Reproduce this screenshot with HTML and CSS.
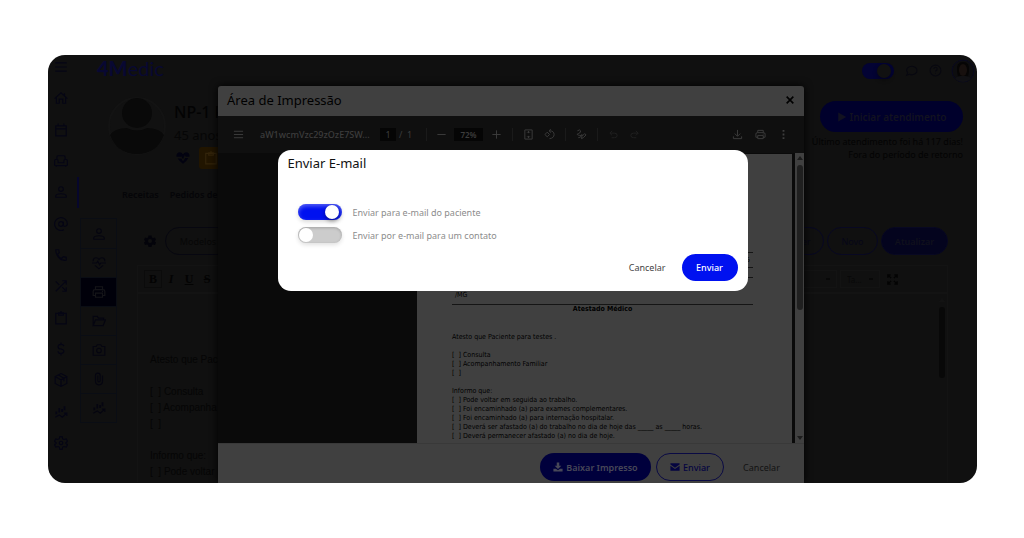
FILE: index.html
```html
<!DOCTYPE html>
<html lang="pt-BR">
<head>
    <meta charset="UTF-8">
    <meta name="viewport" content="width=device-width, initial-scale=1.0">
    <title>4Medic</title>
    <link rel="stylesheet" href="styles.css">
</head>
<body>
    <svg class="defs" aria-hidden="true">
        <symbol id="i-menu" viewBox="0 0 24 24"><path d="M2 5h20M2 12h20M2 19h20"/></symbol>
        <symbol id="i-home" viewBox="0 0 24 24"><path d="M1 13 12 3l11 10M4 11v10h5v-7h6v7h5V11M18 8V4"/></symbol>
        <symbol id="i-cal" viewBox="0 0 24 24"><path d="M3 5h18v17H3zM3 10h18M7 1v4M17 1v4"/></symbol>
        <symbol id="i-sofa" viewBox="0 0 24 24"><path d="M5 10V5q0-2 2-2h10q2 0 2 2v5M7 15v-3q0-3-3-3t-3 3v6q0 2 2 2h18q2 0 2-2v-6q0-3-3-3t-3 3v3zM4 20v2M20 20v2"/></symbol>
        <symbol id="i-user" viewBox="0 0 24 24"><circle cx="12" cy="7" r="4"/><path d="M3 21v-2q0-4 9-4t9 4v2z"/></symbol>
        <symbol id="i-at" viewBox="0 0 24 24"><circle cx="12" cy="12" r="4"/><path d="M16 8v6q0 2 3 2t4-4a11 11 0 1 0-6 10"/></symbol>
        <symbol id="i-phone" viewBox="0 0 24 24"><path d="M3 3h5l1 5-3 3q2 5 7 7l3-3 5 1v5q-8 1-13-5T3 3z"/></symbol>
        <symbol id="i-shuffle" viewBox="0 0 24 24"><path d="m3 4 6 6M3 21 20 4M14 3h7v7M14 14l6 6M21 14v7h-7"/></symbol>
        <symbol id="i-clip" viewBox="0 0 24 24"><path d="M3 4h18v18H3zM8 3h8v4H8zM11 1h2"/></symbol>
        <symbol id="i-money" viewBox="0 0 24 24"><path d="M17 7q-1-3-5-3-5 0-5 4t5 4q5 1 5 4t-5 4q-5 0-5-4M12 1v3M12 20v3"/></symbol>
        <symbol id="i-box" viewBox="0 0 24 24"><path d="m12 1 10 5v12l-10 5-10-5V6zM2 6l10 6 10-6M12 12v11M7 3l10 6v5"/></symbol>
        <symbol id="i-chart" viewBox="0 0 24 24"><path stroke-width="3" d="M4 16v-5M9 13V5M14 12V7M18 9V2"/><path d="M2 21l7-4 5 4 8-7M17 14h5v5"/></symbol>
        <symbol id="i-gear" viewBox="0 0 24 24"><path d="m10 1-1 4-3 1-3-1-2 4 3 3-3 3 2 4 4-1 2 1 1 4h4l1-4 2-1 4 1 2-4-3-3 3-3-2-4-4 1-2-1-1-4z"/><circle cx="12" cy="12" r="3"/></symbol>
        <symbol id="i-gearfill" viewBox="0 0 24 24"><path fill="currentColor" fill-rule="evenodd" stroke="none" d="m9 1-1 4-2 1-4-1-2 5 3 2-3 3 2 5 4-1 2 1 1 4h6l1-4 2-1 4 1 2-5-3-3 3-2-2-5-4 1-2-1-1-4zM12 8a4 4 0 1 1 0 8 4 4 0 0 1 0-8z"/></symbol>
        <symbol id="i-pulse" viewBox="0 0 24 24"><path d="M2 9q0-6 5-6 3 0 5 3 2-3 5-3 5 0 5 6M0 12h8l2-3 3 6 2-3h9M5 16l7 6 7-6"/></symbol>
        <symbol id="i-print" viewBox="0 0 24 24"><path d="M6 8V3h12v5M6 18H2v-7q0-3 3-3h14q3 0 3 3v7h-4M6 14h12v7H6zM17 11h2"/></symbol>
        <symbol id="i-folder" viewBox="0 0 24 24"><path d="M2 20V4h7l2 3h9v3M2 20l4-10h17l-4 10z"/></symbol>
        <symbol id="i-camera" viewBox="0 0 24 24"><path d="M2 6h5l2-3h6l2 3h5v15H2z"/><circle cx="12" cy="13" r="4"/></symbol>
        <symbol id="i-attach" viewBox="0 0 24 24"><path d="M18 6v10a6 6 0 0 1-12 0V6a4 4 0 0 1 8 0v9a2 2 0 0 1-4 0V6"/></symbol>
        <symbol id="i-chat" viewBox="0 0 24 24"><path d="M3 21l2-5Q1 11 5 7q3-3 8-3 9 1 9 8t-9 8q-3 0-5-1z"/></symbol>
        <symbol id="i-help" viewBox="0 0 24 24"><circle cx="12" cy="12" r="10"/><path d="M9 9q0-3 3-3t3 3-3 4v1M12 16v2"/></symbol>
        <symbol id="i-heart" viewBox="0 0 24 24"><path fill="currentColor" stroke="none" d="M1 10Q0 3 6 2q4 0 6 4 2-4 6-4 6 1 5 8h-6l-2-3-3 7-3-5-1 1zM3 13h6l3 5 4-6h5q-2 5-9 10-7-5-9-9z"/></symbol>
        <symbol id="i-full" viewBox="0 0 24 24"><path stroke-width="3" d="m2 2 7 7M22 2l-7 7M2 22l7-7M22 22l-7-7M2 8V2h6M16 2h6v6M2 16v6h6M16 22h6v-6"/></symbol>
        <symbol id="i-fit" viewBox="0 0 24 24"><path d="M4 2h16v20H4zM12 5v4M12 19v-4M9 8l3-3 3 3M9 16l3 3 3-3"/></symbol>
        <symbol id="i-rotate" viewBox="0 0 24 24"><path d="m7 7 5 5-5 5-5-5zM12 4q10 0 10 8t-10 9M15 0l-4 4 4 4"/></symbol>
        <symbol id="i-draw" viewBox="0 0 24 24"><path d="M3 4q6-4 7 0T5 10t3 4 4-3M12 21l1-5 6-6 3 3-6 6zM5 19q6 0 7-5"/></symbol>
        <symbol id="i-undo" viewBox="0 0 24 24"><path d="M9 4 4 9l5 5M4 9h10q6 0 6 5t-6 5H8"/></symbol>
        <symbol id="i-redo" viewBox="0 0 24 24"><path d="m15 4 5 5-5 5M20 9H10q-6 0-6 5t6 5h6"/></symbol>
        <symbol id="i-down" viewBox="0 0 24 24"><path d="M12 2v13M6 10l6 6 6-6M3 16v5h18v-5"/></symbol>
        <symbol id="i-dots" viewBox="0 0 24 24"><path stroke-width="4" d="M12 2v4M12 10v4M12 18v4"/></symbol>
        <symbol id="i-downfill" viewBox="0 0 24 24"><path fill="currentColor" stroke="none" d="M9 1h6v8h5l-8 8-8-8h5zM1 16h6l5 4 5-4h6v7H1z"/></symbol>
        <symbol id="i-mail" viewBox="0 0 24 24"><path fill="currentColor" stroke="none" d="M1 3h22v3l-11 8L1 6zM1 9l11 8 11-8v12H1z"/></symbol>
        <symbol id="i-play" viewBox="0 0 24 24"><path fill="currentColor" stroke="none" d="M3 1v22l19-11z"/></symbol>
        <symbol id="i-close" viewBox="0 0 24 24"><path stroke-width="4" d="m4 4 16 16M20 4 4 20"/></symbol>
        <symbol id="i-minus" viewBox="0 0 24 24"><path d="M3 12h18"/></symbol>
        <symbol id="i-plus" viewBox="0 0 24 24"><path d="M3 12h18M12 3v18"/></symbol>
    </svg>

    <div class="app">
        <nav class="sidebar">
            <a href="#"><svg><use href="#i-menu"/></svg></a>
            <a href="#"><svg><use href="#i-home"/></svg></a>
            <a href="#"><svg><use href="#i-cal"/></svg></a>
            <a href="#"><svg><use href="#i-sofa"/></svg></a>
            <a href="#" class="active"><svg><use href="#i-user"/></svg></a>
            <a href="#"><svg><use href="#i-at"/></svg></a>
            <a href="#"><svg><use href="#i-phone"/></svg></a>
            <a href="#"><svg><use href="#i-shuffle"/></svg></a>
            <a href="#"><svg><use href="#i-clip"/></svg></a>
            <a href="#"><svg><use href="#i-money"/></svg></a>
            <a href="#"><svg><use href="#i-box"/></svg></a>
            <a href="#"><svg><use href="#i-chart"/></svg></a>
            <a href="#"><svg><use href="#i-gear"/></svg></a>
        </nav>

        <main class="main">
            <header class="header">
                <div class="logo"><b>4M</b>edic</div>
                <input type="checkbox" class="toggle dim" aria-label="Disponível" checked>
                <svg class="head-icon"><use href="#i-chat"/></svg>
                <svg class="head-icon"><use href="#i-help"/></svg>
                <svg class="avatar" viewBox="0 0 24 24"><circle cx="12" cy="12" r="11" fill="#0d0d0f" stroke="#0a0a20" stroke-width="1"/><path d="M6 12Q5 3 12 3t6 9l-1 6H7z" fill="#060505"/><ellipse cx="12" cy="11" rx="4" ry="6" fill="#17100e"/><path d="M4 20q1-3 6-3h4q5 0 6 3-8 6-16 0z" fill="#111114"/></svg>
            </header>

            <section class="patient">
                <svg class="photo" viewBox="0 0 58 58"><circle cx="29" cy="29" r="28" fill="#111" stroke="#131313"/><circle cx="29" cy="16" r="15" fill="#090909"/><path d="M2 38q5-7 17-7 10 5 20 0 12 0 17 7-7 19-27 19T2 38z" fill="#090909"/></svg>
                <div class="patient-info">
                    <h1>NP-1 P</h1>
                    <p>45 anos</p>
                    <div class="tags">
                        <svg><use href="#i-heart"/></svg>
                        <span class="tag"><svg><use href="#i-clip"/></svg></span>
                    </div>
                </div>
                <div class="start">
                    <button><svg><use href="#i-play"/></svg>Iniciar atendimento</button>
                    <p>Último atendimento foi há 117 dias!</p>
                    <p>Fora do período de retorno</p>
                </div>
            </section>

            <nav class="tabs">
                <a href="#">Receitas</a>
                <a href="#">Pedidos de</a>
            </nav>

            <section class="work">
                <nav class="submenu">
                    <a href="#"><svg><use href="#i-user"/></svg></a>
                    <a href="#"><svg><use href="#i-pulse"/></svg></a>
                    <a href="#" class="on"><svg><use href="#i-print"/></svg></a>
                    <a href="#"><svg><use href="#i-folder"/></svg></a>
                    <a href="#"><svg><use href="#i-camera"/></svg></a>
                    <a href="#"><svg><use href="#i-attach"/></svg></a>
                    <a href="#"><svg><use href="#i-chart"/></svg></a>
                </nav>
                <div class="editor">
                    <div class="actions">
                        <svg><use href="#i-gearfill"/></svg>
                        <button class="models">Modelos</button>
                        <span class="space"></span>
                        <button class="view">Ver</button>
                        <button>Novo</button>
                        <button class="fill">Atualizar</button>
                    </div>
                    <div class="format">
                        <button class="on"><b>B</b></button>
                        <button><i>I</i></button>
                        <button><u>U</u></button>
                        <button><s>S</s></button>
                        <span class="space"></span>
                        <select aria-label="Fonte"><option></option></select>
                        <select aria-label="Tamanho"><option>Ta...</option></select>
                        <button class="full" aria-label="Tela cheia"><svg><use href="#i-full"/></svg></button>
                    </div>
                    <div class="text">
                        <p>Atesto que Pac</p>
                        <br>
                        <p>[ &nbsp;] Consulta</p>
                        <p>[ &nbsp;] Acompanha</p>
                        <p>[ &nbsp;]</p>
                        <br>
                        <p>Informo que:</p>
                        <p>[ &nbsp;] Pode voltar</p>
                        <div class="bar"><i class="up"></i><span></span></div>
                    </div>
                </div>
            </section>
        </main>

        <section class="print">
            <header class="print-head">
                <h2>Área de Impressão</h2>
                <button aria-label="Fechar"><svg><use href="#i-close"/></svg></button>
            </header>
            <div class="pdf-bar">
                <svg><use href="#i-menu"/></svg>
                <span class="file">aW1wcmVzc29zOzE7SW...</span>
                <input type="text" class="page-no" value="1" aria-label="Página">
                <span class="pages">/ &nbsp;1</span>
                <i class="sep"></i>
                <svg><use href="#i-minus"/></svg>
                <input type="text" class="zoom" value="72%" aria-label="Zoom">
                <svg><use href="#i-plus"/></svg>
                <i class="sep"></i>
                <svg><use href="#i-fit"/></svg>
                <svg class="rot"><use href="#i-rotate"/></svg>
                <i class="sep"></i>
                <svg><use href="#i-draw"/></svg>
                <i class="sep"></i>
                <svg class="off"><use href="#i-undo"/></svg>
                <svg class="off redo"><use href="#i-redo"/></svg>
                <span class="space"></span>
                <svg class="end"><use href="#i-down"/></svg>
                <svg class="end"><use href="#i-print"/></svg>
                <svg class="end"><use href="#i-dots"/></svg>
            </div>
            <div class="viewer">
                <article class="paper">
                    <div class="doctor">5</div>
                    <div class="line"></div>
                    <p class="city">/MG</p>
                    <h3>Atestado Médico</h3>
                    <p>Atesto que Paciente para testes .</p>
                    <br>
                    <p>[ &nbsp;] Consulta</p>
                    <p>[ &nbsp;] Acompanhamento Familiar</p>
                    <p>[ &nbsp;]</p>
                    <br>
                    <p>Informo que:</p>
                    <p>[ &nbsp;] Pode voltar em seguida ao trabalho.</p>
                    <p>[ &nbsp;] Foi encaminhado (a) para exames complementares.</p>
                    <p>[ &nbsp;] Foi encaminhado (a) para internação hospitalar.</p>
                    <p>[ &nbsp;] Deverá ser afastado (a) do trabalho no dia de hoje das _____ as _____ horas.</p>
                    <p>[ &nbsp;] Deverá permanecer afastado (a) no dia de hoje.</p>
                </article>
                <div class="scroll"><i class="up"></i><span></span><i class="down"></i></div>
            </div>
            <footer class="print-foot">
                <button class="fill"><svg><use href="#i-downfill"/></svg>Baixar Impresso</button>
                <button class="outline"><svg><use href="#i-mail"/></svg>Enviar</button>
                <button class="plain">Cancelar</button>
            </footer>
        </section>

        <form class="mail" role="dialog" aria-labelledby="mail-title">
            <h2 id="mail-title">Enviar E-mail</h2>
            <div class="options">
                <label><input type="checkbox" class="toggle" checked>Enviar para e-mail do paciente</label>
                <label><input type="checkbox" class="toggle">Enviar por e-mail para um contato</label>
            </div>
            <div class="mail-foot">
                <button type="button" class="cancel">Cancelar</button>
                <button type="button" class="send">Enviar</button>
            </div>
        </form>
    </div>
</body>
</html>
```
FILE: styles.css
```css
*{
    box-sizing: border-box;
}
body{
    margin:0;
    min-height:100vh;
    padding:55px 47px 55px 48px;
    display: flex;
    background: #fff;
    font-family: "Noto Sans", "Liberation Sans", sans-serif;
    font-size:9px;
    color:#030303;
}
h1,h2,h3,p{
    margin:0;
    font-weight: 400;
}
a{
    color:inherit;
    text-decoration: none;
}
button,input,select{
    font:inherit;
    color:inherit;
    border:0;
    padding:0;
    background: none;
}
button{
    display: flex;
    align-items: center;
    justify-content: center;
    gap:3px;
    white-space: nowrap;
}
svg{
    width:14px;
    height:14px;
    flex:none;
    display: block;
    fill:none;
    stroke:currentColor;
    stroke-width:2;
}
.defs{
    position: absolute;
    width:0;
    height:0;
}
.space{
    flex:1;
}
.app{
    position: relative;
    flex:1;
    min-width:0;
    display: flex;
    overflow: hidden;
    border-radius: 17px;
    background: #101010;
}

/* sidebar */
.sidebar{
    width:31px;
    padding:5px 0 33px 6px;
    display: flex;
    flex-direction: column;
    justify-content: space-between;
    color:#050514;
}
.sidebar a{
    position: relative;
}
.sidebar .active::after{
    content:"";
    position: absolute;
    right:0;
    top:-8px;
    width:2px;
    height:31px;
    background: #06062c;
}
.main{
    flex:1;
    min-width:0;
    height:427px;
    overflow: hidden;
}
.header{
    height:31px;
    padding:0 2px 0 18px;
    display: flex;
    align-items: center;
    color:#080810;
}
.logo{
    flex:1;
    padding-bottom:5px;
    font-family: Lato, sans-serif;
    font-size:20px;
    line-height: 20px;
    color:#080832;
}
.logo b{
    font-weight: 900;
}
.head-icon{
    width:13px;
    height:13px;
    margin-left:11px;
}
.avatar{
    width:24px;
    height:24px;
    margin-left:9px;
    stroke:none;
}

/* toggle */
.toggle{
    appearance: none;
    flex:none;
    width:44px;
    height:16px;
    margin:0;
    padding:1px;
    border-radius: 8px;
    background: #ccc;
    box-shadow: inset 0 1px 3px rgba(0,0,0,.2), 0 2px 4px rgba(0,0,0,.12);
}
.toggle::before{
    content:"";
    display: block;
    width:14px;
    height:14px;
    border-radius: 50%;
    background: #fff;
}
.toggle:checked{
    background: #0011f0;
    box-shadow: inset 0 2px 4px rgba(255,255,255,.35), 0 2px 4px rgba(0,0,0,.15);
}
.toggle:checked::before{
    margin-left:auto;
    margin-right:2px;
    box-shadow: 0 2px 4px rgba(0,0,0,.4);
}
.toggle.dim{
    width:32px;
    background: #030334;
    box-shadow: none;
}
.toggle.dim::before{
    background: #111;
}

/* patient */
.patient{
    margin-top:11px;
    height:74px;
    padding:0 14px 0 29px;
    display: flex;
}
.photo{
    width:58px;
    height:58px;
    stroke:none;
}
.patient-info{
    flex:1;
    padding:4px 0 0 8px;
}
.patient-info h1{
    font-size:16px;
    line-height: 22px;
    font-weight: 500;
}
.patient-info p{
    font-size:13px;
    line-height: 24px;
    color:#060606;
}
.tags{
    display: flex;
    align-items: center;
    gap:9px;
    padding-left:2px;
    color:#020210;
}
.tag{
    padding:4px 5px;
    border-radius: 3px;
    background: #211500;
    color:#33240a;
}
.start{
    padding-top:4px;
    display: flex;
    flex-direction: column;
    align-items: flex-end;
}
.start button{
    width:143px;
    height:31px;
    margin-bottom:3px;
    border-radius: 16px;
    background: #00002c;
    color:#121220;
    font-size:10px;
    font-weight: 600;
}
.start button svg{
    width:10px;
    height:10px;
}
.start p{
    line-height: 13px;
}
.tabs{
    margin-top:14px;
    padding-left:43px;
    display: flex;
    gap:11px;
    line-height: 20px;
    font-weight: 600;
    color:#050508;
}

/* work area */
.work{
    margin-top:13px;
    padding:0 29px 0 1px;
    display: flex;
    align-items: flex-start;
    gap:20px;
}
.submenu{
    width:37px;
    border:1px solid #0a0d14;
    color:#050510;
}
.submenu a{
    height:29px;
    display: flex;
    align-items: center;
    justify-content: center;
}
.submenu a + a{
    border-top:1px solid #0a0d14;
}
.submenu .on{
    background: #00000a;
    color:#141418;
}
.editor{
    flex:1;
    min-width:0;
}
.actions{
    padding:9px 0 10px 7px;
    display: flex;
    align-items: center;
    gap:3px;
    color:#03030a;
}
.actions svg{
    width:12px;
    height:12px;
}
.actions button{
    width:51px;
    height:28px;
    border:1px solid #080822;
    border-radius: 14px;
    color:#060618;
}
.actions .view{
    padding-left:10px;
}
.actions .models{
    width:66px;
    margin-left:6px;
    border-color:#070710;
    color:#070707;
}
.actions .fill{
    width:67px;
    background: #04041e;
    color:#10101c;
    font-weight: 600;
}
.format{
    height:28px;
    padding:0 46px 0 6px;
    border:1px solid #131313;
    display: flex;
    align-items: center;
    font-family: "Liberation Serif", serif;
    font-size:12px;
    font-weight: 700;
}
.format button{
    width:18px;
    height:18px;
}
.format .on{
    border:1px solid #0b0b0b;
}
.format select{
    appearance: none;
    width:40px;
    height:18px;
    margin-right:3px;
    padding:0 6px;
    border:1px solid #131313;
    background: linear-gradient(#080808,#080808) right 6px center / 4px 2px no-repeat;
    color:#080808;
    font-family: "Noto Sans", sans-serif;
    font-size:8px;
    font-weight: 400;
}
.format svg{
    width:11px;
    height:11px;
}
.text{
    position: relative;
    height:200px;
    padding:58px 12px;
    border:1px solid #131313;
    color:#050505;
    font-family: "Liberation Sans", sans-serif;
    font-size:10px;
    line-height: 16px;
}
.bar{
    position: absolute;
    right:2px;
    top:4px;
    width:6px;
}
.bar span{
    display: block;
    height:71px;
    margin-top:5px;
    border-radius: 3px;
    background: #080808;
}
.bar .up{
    display: block;
    opacity:.3;
}

/* print dialog */
.print{
    position: absolute;
    top:31px;
    bottom:0;
    left:0;
    right:3px;
    width:586px;
    margin:0 auto;
    display: flex;
    flex-direction: column;
    border-radius: 3px 3px 0 0;
    background: #404040;
    box-shadow: 0 0 9px #000;
}
.print-head{
    height:30px;
    padding:0 9px 2px;
    display: flex;
    align-items: center;
    justify-content: space-between;
    color:#000;
}
.print-head h2{
    font-size:13px;
}
.print-head svg{
    width:10px;
    height:10px;
}
.pdf-bar{
    height:37px;
    padding:0 15px;
    display: flex;
    align-items: center;
    background: #0f0f0f;
    color:#3d3d3d;
}
.pdf-bar svg{
    width:11px;
    height:11px;
}
.pdf-bar .file{
    width:107px;
    margin:0 13px 0 16px;
    font-weight: 500;
}
.pdf-bar input{
    height:13px;
    background: #050505;
    text-align: center;
}
.page-no{
    width:16px;
}
.pages{
    width:16px;
    margin-left:3px;
    white-space: nowrap;
}
.sep{
    width:1px;
    height:13px;
    margin:0 9px 0 11px;
    background: #1a1a1a;
}
.pdf-bar .zoom{
    width:29px;
    margin:0 8px 0 7px;
    font-size:8px;
    font-weight: 600;
}
.zoom ~ .sep{
    margin:0 10px;
}
.pdf-bar .rot,.pdf-bar .redo{
    margin-left:10px;
}
.pdf-bar .off{
    color:#212121;
}
.pdf-bar .end{
    margin-left:12px;
}
.viewer{
    flex:1;
    min-height:0;
    display: flex;
    background: #0a0a0a;
    overflow: hidden;
}
.paper{
    flex:1;
    margin:1px 3px 0 199px;
    padding:98px 39px 0 35px;
    background: #404040;
    color:#000;
    font-family: "DejaVu Sans Condensed", "DejaVu Sans", sans-serif;
    font-size:7px;
    line-height: 9px;
    white-space: nowrap;
}
.doctor{
    padding:3px 3px 2px 0;
    border-top:1px solid #151515;
    border-bottom:1px solid #151515;
    text-align: right;
}
.line{
    height:10px;
    border-bottom:1px solid #151515;
}
.paper .city{
    margin:13px 0 4px;
    padding-left:3px;
}
.paper h3{
    margin-bottom:19px;
    border-top:1px solid #151515;
    font-size:7px;
    line-height: 9px;
    font-weight: 700;
    text-align: center;
}
.scroll{
    width:9px;
    padding:3px 2px;
    display: flex;
    flex-direction: column;
    align-items: center;
    background: #404040;
}
.scroll span{
    width:6px;
    height:145px;
    margin:5px 0 auto;
    border-radius: 3px;
    background: #202020;
}
.up,.down{
    width:0;
    height:0;
    border:3px solid transparent;
}
.up{
    border-top:0;
    border-bottom:4px solid #1c1c1c;
}
.down{
    border-bottom:0;
    border-top:4px solid #1c1c1c;
}
.print-foot{
    height:40px;
    padding:9px 10px 0 0;
    border-top:1px solid #393939;
    display: flex;
    justify-content: flex-end;
    gap:5px;
}
.print-foot button{
    height:28px;
    border-radius: 14px;
}
.print-foot svg{
    width:10px;
    height:10px;
}
.print-foot .fill{
    width:111px;
    background: #00003c;
    color:#484858;
    font-weight: 600;
}
.print-foot .outline{
    width:68px;
    border:1px solid #0a0a44;
    color:#050540;
    font-weight: 500;
}
.print-foot .plain{
    width:65px;
    color:#131313;
}

/* e-mail dialog */
.mail{
    position: absolute;
    top:95px;
    left:0;
    right:0;
    width:470px;
    margin:0 auto;
    padding:3px 10px 10px;
    border-radius: 13px;
    background: #fff;
}
.mail h2{
    font-size:13px;
    line-height: 20px;
    color:#111;
}
.options{
    padding:31px 10px 11px;
    display: flex;
    flex-direction: column;
    gap:7px;
    color:#8c8c8c;
}
.options label{
    height:16px;
    display: flex;
    align-items: center;
    gap:11px;
}
.mail-foot{
    display: flex;
    justify-content: flex-end;
    gap:16px;
}
.mail-foot button{
    height:27px;
}
.cancel{
    color:#444;
}
.send{
    width:56px;
    border-radius: 14px;
    background: #0011f0;
    color:#fff;
    font-weight: 500;
}
```
